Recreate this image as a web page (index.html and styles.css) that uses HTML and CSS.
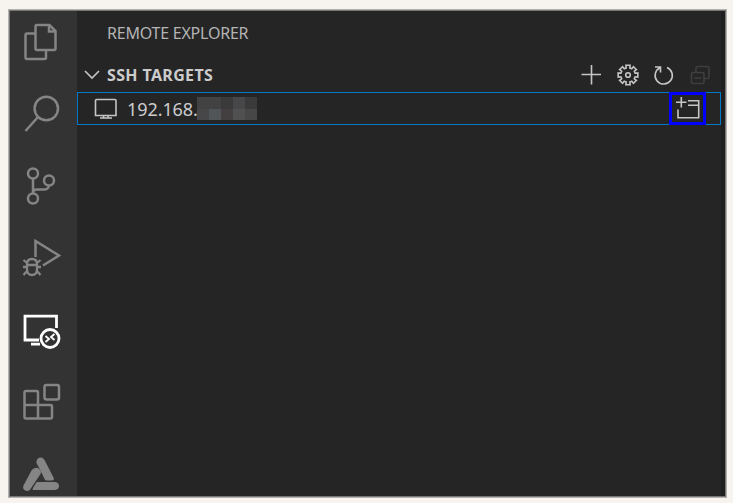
FILE: index.html
```html
<!DOCTYPE html>
<html lang="en">
<head>
<meta charset="utf-8">
<title>Remote Explorer</title>
<link rel="stylesheet" href="styles.css">
</head>
<body>
<main class="window">
  <nav class="activity">
    <svg viewBox="0 0 48 48"><path d="M19 7H31.5L37.5 13V30.5Q37.5 32 36 32H19Q17.500 32 17.500 30.500V8.500Q17.500 7 19 7ZM31 7V13.500H37.500M17 15.500H9Q7.500 15.500 7.500 17V39.500Q7.500 41 9 41H26.500Q28 41 28 39.500V32"/></svg>
    <svg viewBox="0 0 48 48"><circle cx="28.300" cy="18.500" r="11.700"/><path d="M20 27L7.500 41"/></svg>
    <svg viewBox="0 0 48 48"><circle cx="15" cy="11.500" r="5"/><circle cx="15" cy="36.500" r="5"/><circle cx="31" cy="18.500" r="5"/><path d="M15 17V31M31 24Q30 27.500 26 27.500H19Q15 27.500 15 31"/></svg>
    <svg viewBox="0 0 48 48"><path d="M17.500 23V7L41 21.500L25 31.500"/><path class="bug" d="M9 30Q9 25 14 25T19 30V35Q19 41 14 41T9 35ZM9 31H19M5 33H9M19 33H23M9 29L5.500 26M19 29L22.500 26M9 37L5.500 41M19 37L22.500 41"/></svg>
    <svg class="active" viewBox="0 0 48 48"><path d="M38.500 22V10.200H7V34H21M13 38.200H22"/><circle cx="32" cy="32.500" r="9"/><path class="thin" d="M27.500 30L31 33L27.500 36M36.500 28L33 31L36.500 34"/></svg>
    <svg viewBox="0 0 48 48"><path d="M8 13H18.500Q20 13 20 14.500V40.500M6.500 27H32.500Q34 27 34 28.500V39Q34 40.500 32.500 40.500H8Q6.500 40.500 6.500 39V14.500Q6.500 13 8 13"/><rect x="26.500" y="7" width="14.500" height="14.500" rx="2"/></svg>
    <svg class="solid" viewBox="0 0 48 48"><path d="M18.500 13Q18 8 22.500 7.500Q25 7 26.500 10L36 28.500Q36 30.500 34 30.500H29Q27 30.500 26.500 29L23 21.500Z"/><path d="M17.500 18Q19.500 17 21 19Q24 21 22.500 24L12.500 39Q10.500 42 7.500 40.500Q4 39 5.500 35.500L13.500 20.500Q15 18 17.500 18Z"/><path d="M19 32H37Q41 32.500 41 36T37 40H15Q14 39.500 15 38L18 33Z"/></svg>
  </nav>
  <section class="sidebar">
    <h1>REMOTE EXPLORER</h1>
    <header class="section">
      <svg class="chevron" viewBox="0 0 16 16"><path d="M1 4L8 11L15 4"/></svg>
      <h2>SSH TARGETS</h2>
      <div class="tools">
        <svg viewBox="0 0 24 24"><path d="M11.500 2V21.500M1.500 11.500H21"/></svg>
        <svg viewBox="-12 -12 24 24"><path d="M-1.800 -7.100L-2.100 -9.800H2.100L1.800 -7.100L3.800 -6.300L5.400 -8.400L8.400 -5.400L6.300 -3.800L7.100 -1.800L9.800 -2.100V2.100L7.100 1.800L6.300 3.800L8.400 5.400L5.400 8.400L3.800 6.300L1.800 7.100L2.100 9.800H-2.100L-1.800 7.100L-3.800 6.300L-5.400 8.400L-8.400 5.400L-6.300 3.800L-7.100 1.800L-9.800 2.100V-2.100L-7.100 -1.800L-6.300 -3.800L-8.400 -5.400L-5.400 -8.400L-3.800 -6.300Z"/><circle r="2.300"/></svg>
        <svg viewBox="0 0 24 24"><path d="M15 4.500A8.600 8.600 0 1 1 8 4.700M3 4H8.500V9.500"/></svg>
        <svg class="off" viewBox="0 0 24 24"><rect x="3.500" y="9.500" width="12.500" height="11" rx="1.500"/><path d="M6 15H13.500M8 9.500V5Q8 3.500 9.500 3.500H19.500Q21 3.500 21 5V14Q21 15.500 19.500 15.500H16"/></svg>
      </div>
    </header>
    <div class="target">
      <svg class="monitor" viewBox="0 0 24 24"><path d="M1.500 3.500Q1.500 2.500 2.500 2.500H21Q22 2.500 22 3.500V18.500H1.500ZM9.500 19V21M14 19V21M6 21H18"/></svg>
      <span class="host">192.168.</span>
      <span class="mask"><i class="a"></i><i class="a"></i><i class="b"></i><i class="c"></i><i class="b"></i><i class="c"></i><i class="d"></i><i class="e"></i><i class="f"></i><i class="g"></i></span>
      <span class="connect"><svg viewBox="0 0 31 27"><path d="M9.300 2V12.500M4 7.300H14.500M16 5.800H26.700V22.800H6V14.500M16 10.300H26.700"/></svg></span>
    </div>
  </section>
</main>
</body>
</html>
```
FILE: styles.css
```css
* { box-sizing: border-box; }
body { margin: 0; height: 503px; padding: 9px 6px 5px 8px; background: #f7f3ee; font-family: "Noto Sans", sans-serif; overflow: hidden; }
.window { display: flex; height: 489px; border: 1px solid #b4b2af; box-shadow: inset 0 0 0 1px #777; padding: 1px; background: #252526; overflow: hidden; }
.activity { width: 67px; flex: none; background: #333; display: flex; flex-direction: column; gap: 24px; padding: 7px 0 0 8px; overflow: hidden; }
svg { flex: none; fill: none; stroke: #c5c5c5; stroke-width: 1.6; }
.activity svg { width: 48px; height: 48px; stroke: #858585; stroke-width: 2.5; }
.activity .active { stroke: #fff; stroke-width: 2.8; }
.active .thin { stroke-width: 1.8; }
.activity .solid { fill: #858585; stroke: none; }
.activity .bug { stroke-width: 2.3; }
.sidebar { flex: 1; border-right: 4px solid #1f1f1f; }
h1, h2 { margin: 0; font-weight: 400; white-space: nowrap; }
h1 { height: 47px; padding-left: 30px; font-size: 16px; line-height: 45px; color: #b4b4b4; letter-spacing: -.22px; }
.section { display: flex; align-items: center; height: 34px; padding-left: 7px; }
.chevron { width: 16px; height: 16px; }
h2 { margin-left: 7px; font-size: 16px; font-weight: 700; color: #ccc; letter-spacing: .35px; }
.tools { margin-left: auto; display: flex; gap: 12px; padding-right: 9px; }
.tools svg { width: 24px; height: 24px; }
.tools .off { stroke: #3f3f40; }
.target { height: 33px; border: 1px solid #0078c8; display: flex; align-items: center; padding: 0 14px 0 16px; }
.monitor { width: 24px; height: 24px; }
.host { width: 70px; margin-left: 9px; font-size: 18px; line-height: 30px; color: #ccc; letter-spacing: -.08px; white-space: nowrap; }
.mask { display: grid; grid-template-columns: repeat(5, 12px); grid-template-rows: 12px 11px; }
.a { background: #424243; }
.b { background: #3b3a3b; }
.c { background: #474648; }
.d { background: #515558; }
.e { background: #433f41; }
.f { background: #505051; }
.g { background: #474748; }
.connect { flex: none; margin-left: auto; width: 37px; height: 33px; border: 3px solid #00f; display: flex; }
.connect svg { width: 31px; height: 27px; }
```
